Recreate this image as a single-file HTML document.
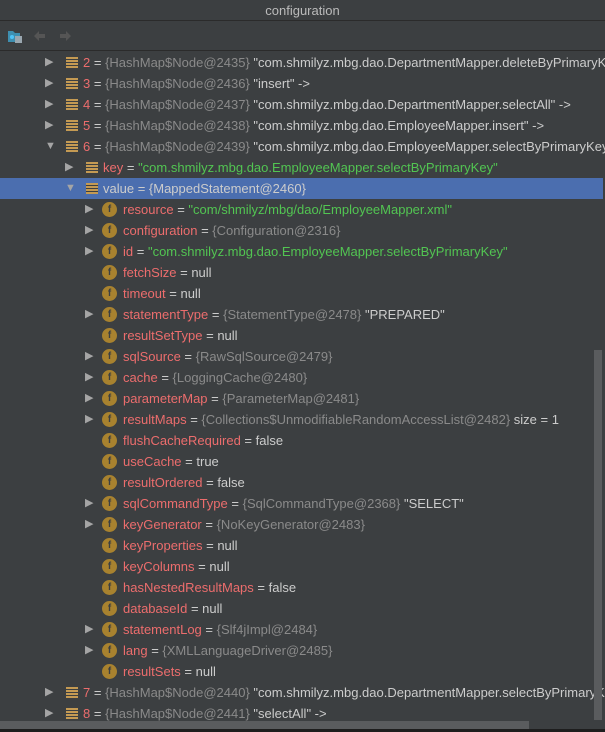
<!DOCTYPE html><html><head><style>
body{margin:0;width:605px;height:732px;background:#3c3f41;font-family:"Liberation Sans","DejaVu Sans",sans-serif;font-size:13px;overflow:hidden;position:relative}
.title{position:absolute;left:0;top:0;width:605px;height:20px;background:#3c3f41;color:#bbb;text-align:center;line-height:21px;font-size:13px;border-bottom:1px solid #2b2b2b}
.tb{position:absolute;top:21px;left:0;width:605px;height:29px;border-bottom:1px solid #2b2b2b}
.row{position:absolute;left:0;width:603px;height:21px;line-height:21px;white-space:nowrap;color:#bbb}
.sel{background:#4b6eaf}
.ar{position:absolute;top:0;color:#a5a5a5;font-size:11px}
.ic{position:absolute;top:5px;width:12px;height:11px;background:repeating-linear-gradient(#c49a53 0 2px,#3c3f41 2px 3px)}
.f{position:absolute;top:3px;width:15px;height:15px;border-radius:50%;background:#a8822f;color:#3c3f41;font-size:10px;line-height:15px;text-align:center;font-weight:bold}
.t{position:absolute;top:0}
.n{color:#ec6d6d}.g{color:#8a8a8a}.s{color:#52c552}.w{color:#ccc}
.vs{position:absolute;left:594px;top:350px;width:8px;height:370px;background:#5a5c5e}
.hs{position:absolute;left:0;top:721px;width:529px;height:8px;background:#5a5c5e}
.bot{position:absolute;left:0;top:729px;width:605px;height:3px;background:#1e1e1e}
</style></head><body>
<div class="title">configuration</div>
<div class="tb">
<svg width="80" height="29" style="position:absolute;left:0;top:0">
<path d="M8 10h5l2 2h5v9H8z" fill="#3e8fb0"/><rect x="15" y="15" width="7" height="7" fill="#9aa7b0"/><circle cx="12" cy="16" r="2" fill="#4fc3f7"/>
<path d="M34 15l5-5v3h6v4h-6v3z" fill="#555"/><path d="M71 15l-5-5v3h-6v4h6v3z" fill="#555"/>
</svg></div>
<div id="rows"></div>
<div class="vs"></div><div class="hs"></div><div class="bot"></div>
<script>
var R=[
[0,'r',1,'2','{HashMap$Node@2435}',' "com.shmilyz.mbg.dao.DepartmentMapper.deleteByPrimaryKey"'],
[0,'r',1,'3','{HashMap$Node@2436}',' "insert" ->'],
[0,'r',1,'4','{HashMap$Node@2437}',' "com.shmilyz.mbg.dao.DepartmentMapper.selectAll" ->'],
[0,'r',1,'5','{HashMap$Node@2438}',' "com.shmilyz.mbg.dao.EmployeeMapper.insert" ->'],
[0,'d',1,'6','{HashMap$Node@2439}',' "com.shmilyz.mbg.dao.EmployeeMapper.selectByPrimaryKey"'],
[1,'r',1,'key','','','"com.shmilyz.mbg.dao.EmployeeMapper.selectByPrimaryKey"'],
[1,'d',1,'value','{MappedStatement@2460}','','',1],
[2,'r',2,'resource','','','"com/shmilyz/mbg/dao/EmployeeMapper.xml"'],
[2,'r',2,'configuration','{Configuration@2316}',''],
[2,'r',2,'id','','','"com.shmilyz.mbg.dao.EmployeeMapper.selectByPrimaryKey"'],
[2,'',2,'fetchSize','','',null],
[2,'',2,'timeout','','',null],
[2,'r',2,'statementType','{StatementType@2478}',' "PREPARED"'],
[2,'',2,'resultSetType','','',null],
[2,'r',2,'sqlSource','{RawSqlSource@2479}',''],
[2,'r',2,'cache','{LoggingCache@2480}',''],
[2,'r',2,'parameterMap','{ParameterMap@2481}',''],
[2,'r',2,'resultMaps','{Collections$UnmodifiableRandomAccessList@2482}','  size = 1'],
[2,'',2,'flushCacheRequired','','','false'],
[2,'',2,'useCache','','','true'],
[2,'',2,'resultOrdered','','','false'],
[2,'r',2,'sqlCommandType','{SqlCommandType@2368}',' "SELECT"'],
[2,'r',2,'keyGenerator','{NoKeyGenerator@2483}',''],
[2,'',2,'keyProperties','','',null],
[2,'',2,'keyColumns','','',null],
[2,'',2,'hasNestedResultMaps','','','false'],
[2,'',2,'databaseId','','',null],
[2,'r',2,'statementLog','{Slf4jImpl@2484}',''],
[2,'r',2,'lang','{XMLLanguageDriver@2485}',''],
[2,'',2,'resultSets','','',null],
[0,'r',1,'7','{HashMap$Node@2440}',' "com.shmilyz.mbg.dao.DepartmentMapper.selectByPrimaryKey"'],
[0,'r',1,'8','{HashMap$Node@2441}',' "selectAll" ->']];
var h='';R.forEach(function(r,i){var y=52+i*21,x=45+r[0]*20;
h+='<div class="row'+(r[7]?' sel':'')+'" style="top:'+y+'px">';
if(r[1])h+='<span class="ar" style="left:'+x+'px">'+(r[1]=='r'?'&#9654;':'&#9660;')+'</span>';
if(r[2]==1)h+='<span class="ic" style="left:'+(x+21)+'px"></span>';else h+='<span class="f" style="left:'+(x+17)+'px">f</span>';
var v;if(r[4])v='<span class="'+(r[7]?'w':'g')+'">'+r[4]+'</span><span class="w">'+r[5]+'</span>';
else if(r[6]===null)v='<span class="w">null</span>';
else if(r[6][0]=='"')v='<span class="s">'+r[6]+'</span>';else v='<span class="w">'+r[6]+'</span>';
h+='<span class="t" style="left:'+(x+38)+'px"><span class="'+(r[7]?'w':'n')+'">'+r[3]+'</span><span class="w"> = </span>'+v+'</span></div>';});
document.getElementById('rows').innerHTML=h;
</script>
</body></html>
